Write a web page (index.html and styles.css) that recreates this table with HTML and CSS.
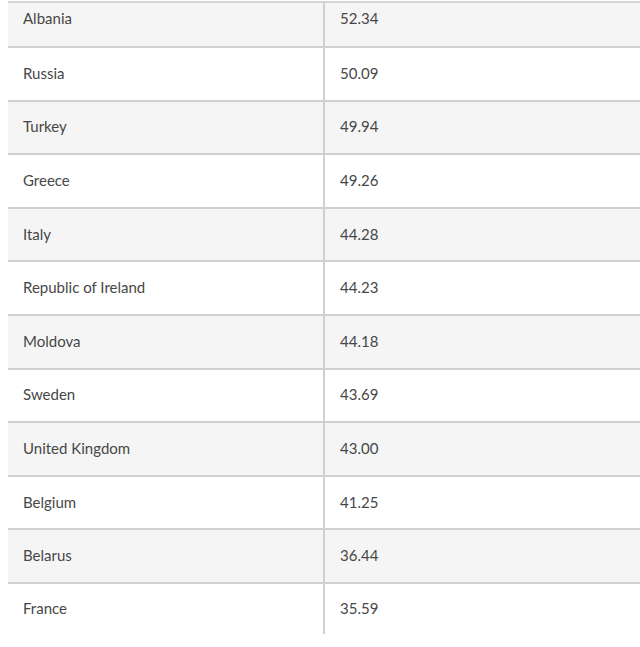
FILE: index.html
```html
<!DOCTYPE html>
<html>
<head>
<meta charset="utf-8">
<link rel="stylesheet" href="styles.css">
</head>
<body>
<div class="table">
  <div class="row first gray"><div class="cell name">Albania</div><div class="cell val">52.34</div></div>
  <div class="row"><div class="cell name">Russia</div><div class="cell val">50.09</div></div>
  <div class="row gray"><div class="cell name">Turkey</div><div class="cell val">49.94</div></div>
  <div class="row"><div class="cell name">Greece</div><div class="cell val">49.26</div></div>
  <div class="row gray"><div class="cell name">Italy</div><div class="cell val">44.28</div></div>
  <div class="row"><div class="cell name">Republic of Ireland</div><div class="cell val">44.23</div></div>
  <div class="row gray"><div class="cell name">Moldova</div><div class="cell val">44.18</div></div>
  <div class="row"><div class="cell name">Sweden</div><div class="cell val">43.69</div></div>
  <div class="row gray"><div class="cell name">United Kingdom</div><div class="cell val">43.00</div></div>
  <div class="row"><div class="cell name">Belgium</div><div class="cell val">41.25</div></div>
  <div class="row gray"><div class="cell name">Belarus</div><div class="cell val">36.44</div></div>
  <div class="row last"><div class="cell name">France</div><div class="cell val">35.59</div></div>
</div>
</body>
</html>
```

FILE: styles.css
```css
html, body {
  margin: 0;
  padding: 0;
  background: #ffffff;
}
body {
  padding: 1px 0 0 8px;
  font-family: Lato, "Open Sans", sans-serif;
  font-size: 15px;
  color: #474747;
  overflow: hidden;
}
.table {
  width: 632px;
  border-top: 2px solid #d4d4d4;
}
.row {
  display: grid;
  grid-template-columns: 317px 1fr;
  height: 53.6px;
  border-top: 2px solid #d0d0d0;
  box-sizing: border-box;
}
.row.first {
  height: 43px;
  border-top: none;
}
.row.gray {
  background: #f5f5f5;
}
.cell {
  display: flex;
  align-items: center;
  padding: 0 0 2px 15px;
}
.row.first .cell {
  padding-bottom: 13px;
}
.name {
  border-right: 2px solid #d0d0d0;
}
.val {
  padding-left: 15px;
}
.row.last {
  height: 52px;
}
```
